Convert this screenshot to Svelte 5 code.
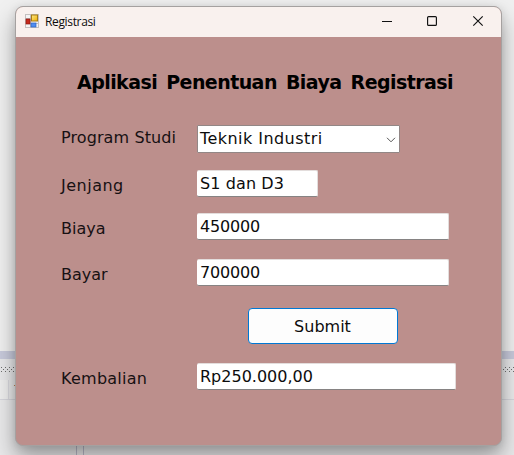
<script>
  const rows = [
    { label: 'Program Studi', value: 'Teknik Industri', kind: 'combo' },
    { label: 'Jenjang', value: 'S1 dan D3', kind: 'short' },
    { label: 'Biaya', value: '450000', kind: 'biaya' },
    { label: 'Bayar', value: '700000', kind: 'bayar' },
  ];
</script>

<div class="desktop">
  <div class="backdrop">
    <div class="band"></div>
    <div class="dots">
      <svg width="514" height="6">
        <defs>
          <pattern id="grip" width="4" height="4" patternUnits="userSpaceOnUse">
            <path d="M1 0h1v1h-1zM3 2h1v1h-1z" fill="#6e6e6e" />
          </pattern>
        </defs>
        <rect width="514" height="5" fill="url(#grip)" shape-rendering="crispEdges" />
      </svg>
    </div>
    <div class="strip"><i class="dash"></i></div>
    <div class="floor"><i class="split"></i></div>
  </div>
  <main class="window">
    <header>
      <svg class="app" width="14" height="14" viewBox="0 0 14 14">
        <defs>
          <linearGradient id="gold" x1="0" y1="0" x2="1" y2="1"><stop offset="0" stop-color="#ffe98c" /><stop offset="1" stop-color="#eeb000" /></linearGradient>
        </defs>
        <rect x=".5" y=".5" width="13" height="13" fill="#f5f3f3" stroke="#c4c0bf" />
        <path d="M5.5 0v14M0 4.5h6M0 9.5h14" stroke="#c4c0bf" />
        <rect x="6.5" y="1" width="6" height="6" fill="url(#gold)" stroke="#a87c14" />
        <rect x="1" y="5" width="4" height="5" fill="#c5281c" stroke="#8f1710" stroke-width=".7" />
        <rect x="6" y="9" width="5" height="4" fill="#4f8cf0" stroke="#2b62c4" stroke-width=".7" />
      </svg>
      <span class="caption">Registrasi</span>
      <svg class="controls" width="102" height="12" viewBox="0 0 102 12" fill="none" stroke="#111" stroke-width="1">
        <path d="M0 6.5h10" />
        <rect x="45.6" y="1.6" width="8.8" height="8.8" rx="1" stroke-width="1.15" />
        <path d="M91.3 1.3l9.4 9.4M100.7 1.3l-9.4 9.4" stroke-width="1.15" />
      </svg>
    </header>
    <h1><span>Aplikasi Penentuan Biaya Registrasi</span></h1>
    <form onsubmit={(e) => e.preventDefault()}>
      {#each rows as row}
        <div class="row {row.kind}">
          <span class="label"><span>{row.label}</span></span>
          <div class="field">
            <span>{row.value}</span>
            {#if row.kind === 'combo'}
              <svg width="10" height="6" viewBox="0 0 10 6"><path d="M1 .8l4 4 4-4" fill="none" stroke="#555" /></svg>
            {/if}
          </div>
        </div>
      {/each}
      <button type="submit">Submit</button>
      <div class="row total">
        <span class="label"><span>Kembalian</span></span>
        <div class="field"><span>Rp250.000,00</span></div>
      </div>
    </form>
  </main>
</div>

<style>
  .desktop {
    position: relative;
    box-sizing: border-box;
    width: 514px;
    height: 455px;
    padding: 6px 12px 9px 15px;
    overflow: hidden;
    background: #f0f0f0;
    font-family: Verdana, 'DejaVu Sans', sans-serif;
    font-size: 16px;
    color: #0c0c0c;
  }
  .backdrop {
    position: absolute;
    inset: 0;
    padding-top: 351px;
  }
  .band { height: 8px; background: #c8cadb; }
  .dots {
    box-sizing: border-box;
    height: 21px;
    padding-top: 8px;
    background: #e8e8ea;
  }
  .dots svg { display: block; }
  .strip {
    height: 20px;
    box-sizing: border-box;
    padding: 5px 0 0 14px;
    border-bottom: 1px solid #d6d6dc;
    background: linear-gradient(90deg, #eee 8px, #dadadf 8px 9px, #eaeaeb 9px);
  }
  .dash { display: block; width: 2px; height: 1px; background: #c08050; }
  .floor { height: 55px; padding-left: 76px; background: #e9e9ea; }
  .split { display: block; width: 6px; height: 55px; border: solid #b9b9c8; border-width: 0 1px; }
  .window {
    position: relative;
    box-sizing: border-box;
    width: 487px;
    height: 440px;
    border: 1px solid #a5a1a0;
    border-radius: 8px;
    background: #bc8f8c;
    box-shadow: 0 12px 22px rgba(0, 0, 0, .34), 0 1px 8px rgba(0, 0, 0, .1);
  }
  header {
    display: flex;
    align-items: center;
    height: 30px;
    padding: 0 17px 0 9px;
    box-sizing: border-box;
    border-radius: 7px 7px 0 0;
    background: #f9f1ee;
  }
  .app { margin-top: -2px; }
  .caption {
    margin-left: 6px;
    font: 12px/16px 'Segoe UI', 'Open Sans', sans-serif;
    letter-spacing: -.35px;
  }
  .controls { margin: -2px 0 0 auto; }
  h1 {
    margin: 33px 0 0 61px;
    font-size: 19px;
    line-height: 24px;
    font-weight: 700;
    white-space: nowrap;
    color: #000;
    letter-spacing: -.56px;
    word-spacing: 3px;
  }
  form { padding: 31px 0 0 45px; }
  .row { display: flex; height: 27px; white-space: nowrap; }
  .label { width: 136px; padding-top: 6px; line-height: 20px; color: #171113; }
  .field {
    box-sizing: border-box;
    width: 252px;
    height: 27px;
    padding: 3px 0 0 3px;
    line-height: 20px;
    border: solid #e3dddc;
    border-width: 1px 1px 1px 0;
    border-bottom-color: #868383;
    border-radius: 2px;
    background: #fff;
  }
  .combo { height: 28px; }
  .combo .label { padding-top: 3px; letter-spacing: .1px; }
  .combo .field {
    display: flex;
    justify-content: space-between;
    width: 203px;
    height: 28px;
    padding: 3px 3px 0 2px;
    border: 1px solid #928786;
    border-radius: 1px;
    letter-spacing: .45px;
  }
  .combo svg { margin-top: 8px; }
  .short { margin-top: 17px; }
  .short .label { letter-spacing: .5px; }
  .short .field { width: 121px; letter-spacing: .1px; }
  .biaya { margin-top: 16px; }
  .bayar { margin-top: 19px; }
  .biaya .field, .bayar .field { letter-spacing: -.18px; }
  button {
    display: block;
    width: 150px;
    height: 36px;
    margin: 22px 0 19px 187px;
    padding: 0 1px 0 0;
    border: 1px solid #0078d4;
    border-radius: 4px;
    background: #fdfdfd;
    font: inherit;
    color: inherit;
  }
  .total .label { letter-spacing: .25px; }
  .total .field { width: 259px; }
</style>
